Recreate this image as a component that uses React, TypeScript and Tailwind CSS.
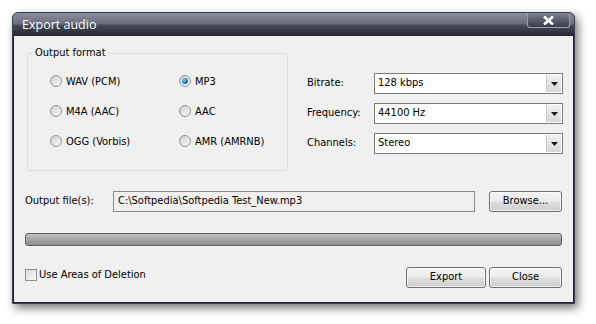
import React from "react";

const font = { fontFamily: '"DejaVu Sans Condensed", "Liberation Sans", sans-serif' };

function Radio({ checked, label }: { checked?: boolean; label: string }) {
  return (
    <div className="flex items-center gap-[4px] h-[14px]">
      <div className="w-[12px] h-[12px] rounded-full border border-[#939494] bg-gradient-to-br from-[#d0d0d0] to-[#fafafa] flex items-center justify-center">
        {checked && (
          <div className="w-[6px] h-[6px] rounded-full bg-[radial-gradient(circle_at_35%_35%,#8ed0f5,#1c6aa8_60%,#0c3d6b)]" />
        )}
      </div>
      <span className="text-[11px] text-black leading-none">{label}</span>
    </div>
  );
}

function Combo({ value }: { value: string }) {
  return (
    <div className="w-[189px] h-[21px] border border-[#7a7a7a] bg-white flex items-stretch">
      <div className="flex-1 flex items-center pl-[3px] text-[11px] text-black">{value}</div>
      <div className="w-[15px] m-[1px] ml-0 bg-gradient-to-b from-[#f0f0f0] to-[#d8d8d8] border-l border-[#c8c8c8] flex items-center justify-center">
        <svg width="7" height="4" viewBox="0 0 7 4">
          <path d="M0 0 H7 L3.5 4 Z" fill="#1a1a1a" />
        </svg>
      </div>
    </div>
  );
}

function Btn({ label, w }: { label: string; w: string }) {
  return (
    <div
      className={`${w} h-[21px] rounded-[3px] border border-[#707070] flex items-center justify-center text-[11px] text-black bg-[linear-gradient(to_bottom,#f4f4f4_0%,#ebebeb_48%,#dddddd_52%,#cfcfcf_100%)] shadow-[inset_0_0_0_1px_rgba(255,255,255,0.7)]`}
    >
      {label}
    </div>
  );
}

export default function App() {
  return (
    <div className="w-[596px] h-[324px] bg-white relative overflow-hidden" style={font}>
      <div className="absolute left-[12px] top-[12px] w-[563px] h-[292px] rounded-t-[6px] bg-[#1f2029] border border-[#3c3f4e] shadow-[3px_4px_10px_rgba(0,0,0,0.55)] flex flex-col">
        {/* title bar */}
        <div className="h-[23px] rounded-t-[5px] bg-[linear-gradient(to_bottom,#8a8e9c_0%,#6c707f_45%,#454857_55%,#262732_100%)] flex items-start justify-between pl-[9px] pr-[4px]">
          <span
            className="text-white text-[12.5px] mt-[3px]"
            style={{ fontFamily: '"Open Sans", "Liberation Sans", sans-serif' }}
          >
            Export audio
          </span>
          <div className="w-[43px] h-[15px] border border-[#9a9eab] border-t-0 rounded-b-[3px] bg-[linear-gradient(to_bottom,#7c8090,#3a3c4a)] flex items-center justify-center">
            <svg width="11" height="9" viewBox="0 0 11 9">
              <path d="M1 0.5 L10 8.5 M10 0.5 L1 8.5" stroke="#ffffff" strokeWidth="2.6" />
            </svg>
          </div>
        </div>
        {/* body */}
        <div className="flex-1 mx-[1px] mb-[1px] bg-[#f0f0f0] pl-[13px] pr-[10px] pt-[17px]">
          <div className="flex">
            {/* group box */}
            <div className="relative w-[261px] h-[118px] border border-[#d5dfe5] rounded-[3px] pl-[22px] pt-[20px]">
              <span className="absolute left-[5px] top-[-8px] px-[2px] bg-[#f0f0f0] text-[11px] text-black leading-[14px]">
                Output format
              </span>
              <div className="grid grid-cols-[129px_auto] gap-y-[16px]">
                <Radio label="WAV (PCM)" />
                <Radio label="MP3" checked />
                <Radio label="M4A (AAC)" />
                <Radio label="AAC" />
                <Radio label="OGG (Vorbis)" />
                <Radio label="AMR (AMRNB)" />
              </div>
            </div>
            {/* settings */}
            <div className="ml-[19px] pt-[20px] flex flex-col gap-[9px]">
              {[
                ["Bitrate:", "128 kbps"],
                ["Frequency:", "44100 Hz"],
                ["Channels:", "Stereo"],
              ].map(([l, v]) => (
                <div key={l} className="flex items-center">
                  <span className="w-[67px] text-[11px] text-black">{l}</span>
                  <Combo value={v} />
                </div>
              ))}
            </div>
          </div>
          {/* output file */}
          <div className="flex items-center mt-[20px] ml-[-2px]">
            <span className="w-[88px] text-[11px] text-black">Output file(s):</span>
            <div className="w-[362px] h-[21px] border border-[#8a8a8a] flex items-center pl-[4px] text-[11px] text-black">
              C:\Softpedia\Softpedia Test_New.mp3
            </div>
            <div className="ml-[14px]">
              <Btn label="Browse..." w="w-[73px]" />
            </div>
          </div>
          {/* progress */}
          <div className="mt-[21px] ml-[-2px] w-[537px] h-[13px] rounded-[3px] border border-[#5e5e5e] bg-[linear-gradient(to_bottom,#c4c4c4_0%,#a8a8a8_40%,#8f8f8f_100%)]" />
          {/* bottom */}
          <div className="flex items-start mt-[21px] ml-[-2px] w-[537px]">
            <div className="mt-[2px] w-[12px] h-[12px] border border-[#8e8f8f] bg-gradient-to-br from-[#dcdcdc] to-[#f8f8f8]" />
            <span className="ml-[2px] mt-[1px] text-[11px] leading-[14px] text-black">Use Areas of Deletion</span>
            <div className="flex-1" />
            <Btn label="Export" w="w-[80px]" />
            <div className="ml-[3px]">
              <Btn label="Close" w="w-[73px]" />
            </div>
          </div>
        </div>
      </div>
    </div>
  );
}
